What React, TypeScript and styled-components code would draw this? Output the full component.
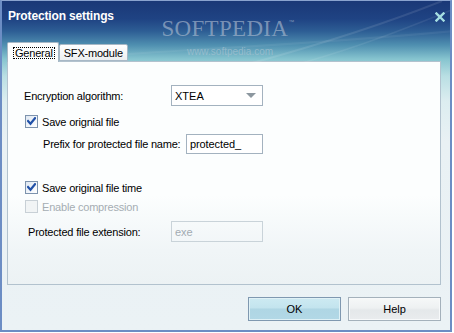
import React from 'react'
import styled, { createGlobalStyle } from 'styled-components'

const GlobalStyle = createGlobalStyle`
  html, body {
    margin: 0;
    padding: 0;
    background: #ffffff;
  }
  body {
    font-family: 'Liberation Sans', Arial, sans-serif;
    font-size: 11px;
    color: #000;
  }
`

const CheckMark: React.FC = () => (
  <svg width="9" height="9" viewBox="0 0 9 9">
    <polyline points="1,4 3.5,6.8 8,1.2" fill="none" stroke="#2151a8" strokeWidth="2.2" strokeLinecap="square" />
  </svg>
)

const CloseIcon: React.FC = () => (
  <svg width="10" height="10" viewBox="0 0 10 10">
    <path d="M1.5 1.5 L8.5 8.5 M8.5 1.5 L1.5 8.5" stroke="#a6dfe2" strokeWidth="2.4" strokeLinecap="square" />
  </svg>
)

const Arrow: React.FC = () => (
  <svg width="10" height="5" viewBox="0 0 10 5">
    <polygon points="0,0 10,0 5,5" fill="#8c979f" />
  </svg>
)

// faint light arcs drawn across the caption gradient
const CaptionGlow: React.FC = () => (
  <GlowSvg width="452" height="62" viewBox="0 0 452 62">
    <path d="M250 62 C 330 40, 390 20, 440 0" fill="none" stroke="rgba(255,255,255,0.10)" strokeWidth="2" />
    <path d="M300 62 C 360 45, 410 25, 452 8" fill="none" stroke="rgba(255,255,255,0.08)" strokeWidth="1.5" />
    <path d="M20 62 C 120 50, 260 48, 452 30" fill="none" stroke="rgba(255,255,255,0.06)" strokeWidth="2" />
  </GlowSvg>
)

const Check: React.FC<{ checked?: boolean; disabled?: boolean; label: string }> = ({ checked, disabled, label }) => (
  <CheckRow>
    <CheckBox $disabled={disabled}>{checked && <CheckMark />}</CheckBox>
    <CheckLabel $disabled={disabled}>{label}</CheckLabel>
  </CheckRow>
)

const App: React.FC = () => (
  <>
    <GlobalStyle />
    <Window>
      <CaptionGlow />
      <Watermark>
        <WatermarkBrand>
          SOFTPEDIA<sup>™</sup>
        </WatermarkBrand>
        <WatermarkUrl>www.softpedia.com</WatermarkUrl>
      </Watermark>
      <TitleBar>
        <Title>Protection settings</Title>
        <CloseButton>
          <CloseIcon />
        </CloseButton>
      </TitleBar>
      <TabStrip>
        <Tab $active>
          <FocusRing>General</FocusRing>
        </Tab>
        <Tab>SFX-module</Tab>
      </TabStrip>
      <Panel>
        <FieldRow $top={23}>
          <FieldLabel $indent={16}>Encryption algorithm:</FieldLabel>
          <Select>
            <span>XTEA</span>
            <Arrow />
          </Select>
        </FieldRow>
        <CheckWrap $top={9} $indent={17}>
          <Check checked label="Save orignial file" />
        </CheckWrap>
        <FieldRow $top={6} $height={20}>
          <FieldLabel $indent={35} $width={143}>
            Prefix for protected file name:
          </FieldLabel>
          <TextBox $width={77}>protected_</TextBox>
        </FieldRow>
        <CheckWrap $top={27} $indent={17}>
          <Check checked label="Save original file time" />
        </CheckWrap>
        <CheckWrap $top={6} $indent={17}>
          <Check disabled label="Enable compression" />
        </CheckWrap>
        <FieldRow $top={8}>
          <FieldLabel $indent={20} $width={143}>
            Protected file extension:
          </FieldLabel>
          <TextBox $width={92} $disabled>
            exe
          </TextBox>
        </FieldRow>
      </Panel>
      <ButtonRow>
        <Button $primary>OK</Button>
        <Button>Help</Button>
      </ButtonRow>
    </Window>
  </>
)

const Window = styled.div`
  position: relative;
  box-sizing: border-box;
  width: 452px;
  height: 332px;
  display: flex;
  flex-direction: column;
  border: 2px solid #6c8dc4;
  border-top: 1px solid #8aa3cf;
  background: linear-gradient(
    to bottom,
    #1a3877 0px,
    #1f4383 18px,
    #2d5d94 30px,
    #4f8fb0 44px,
    #86c4cf 58px,
    #b9dfe3 75px,
    #dcedf0 100px,
    #e9f1f4 140px,
    #ebf2f5 100%
  );
  overflow: hidden;
`

const GlowSvg = styled.svg`
  position: absolute;
  left: 0;
  top: 0;
  pointer-events: none;
`

const Watermark = styled.div`
  position: absolute;
  left: 160px;
  top: 16px;
  width: 132px;
  display: flex;
  flex-direction: column;
  align-items: center;
  pointer-events: none;
`

const WatermarkBrand = styled.div`
  font-family: 'Liberation Serif', 'Times New Roman', serif;
  font-size: 23px;
  letter-spacing: 0.3px;
  color: rgba(176, 190, 210, 0.62);
  line-height: 23px;
  sup {
    font-family: 'Liberation Sans', Arial, sans-serif;
    font-size: 6px;
    vertical-align: top;
    line-height: 10px;
  }
`

const WatermarkUrl = styled.div`
  margin-top: 6px;
  margin-left: 4px;
  font-family: 'Liberation Sans', Arial, sans-serif;
  font-size: 10px;
  color: rgba(170, 196, 210, 0.65);
  line-height: 11px;
`

const TitleBar = styled.div`
  position: relative;
  height: 29px;
  display: flex;
  align-items: center;
  justify-content: space-between;
  padding: 0 5px 0 6px;
`

const Title = styled.div`
  font-family: 'Liberation Sans', Arial, sans-serif;
  font-weight: bold;
  font-size: 12px;
  letter-spacing: -0.15px;
  color: #ffffff;
  margin-top: 1px;
`

const CloseButton = styled.div`
  width: 10px;
  height: 10px;
  display: flex;
  margin-top: 3px;
`

const TabStrip = styled.div`
  height: 19px;
  margin-top: 12px;
  padding-left: 5px;
  display: flex;
  align-items: flex-end;
  position: relative;
  z-index: 1;
`

const Tab = styled.div<{ $active?: boolean }>`
  box-sizing: border-box;
  height: ${p => (p.$active ? 20 : 17)}px;
  margin-bottom: ${p => (p.$active ? -1 : 0)}px;
  padding: ${p => (p.$active ? '0 3px 0 5px' : '1px 4px 0 4px')};
  display: flex;
  align-items: center;
  border: 1px solid #a7b8c6;
  border-bottom: ${p => (p.$active ? 'none' : '1px solid #a7b8c6')};
  border-radius: 2px 2px 0 0;
  background: ${p => (p.$active ? '#fcfefe' : 'linear-gradient(to bottom, #ffffff, #eceff0)')};
  color: #000;
  font-size: 11px;
  letter-spacing: -0.2px;
  white-space: nowrap;
`

const FocusRing = styled.span`
  border: 1px dotted #000;
  padding: 0 1px;
  line-height: 10px;
  height: 10px;
  display: flex;
  align-items: center;
`

const Panel = styled.div`
  box-sizing: border-box;
  margin: 0 9px 0 5px;
  height: 224px;
  border: 1px solid #b2c2ce;
  background: linear-gradient(to bottom, #fcfefe 0%, #fcfefe 60%, #f0f5f7 85%, #ecf2f4 100%);
  display: flex;
  flex-direction: column;
`

const FieldRow = styled.div<{ $top: number; $height?: number }>`
  display: flex;
  align-items: center;
  margin-top: ${p => p.$top}px;
  height: ${p => p.$height ?? 21}px;
`

const FieldLabel = styled.div<{ $indent: number; $width?: number }>`
  margin-left: ${p => p.$indent}px;
  width: ${p => p.$width ?? 147}px;
  font-size: 11px;
  letter-spacing: -0.2px;
  color: #000;
  white-space: nowrap;
`

const Select = styled.div`
  box-sizing: border-box;
  width: 92px;
  height: 21px;
  border: 1px solid #a3b2bf;
  background: #ffffff;
  display: flex;
  align-items: center;
  justify-content: space-between;
  padding: 0 6px 0 3px;
  font-size: 11px;
`

const TextBox = styled.div<{ $width: number; $disabled?: boolean }>`
  box-sizing: border-box;
  width: ${p => p.$width}px;
  height: 100%;
  border: 1px solid ${p => (p.$disabled ? '#c9d3d9' : '#a3b2bf')};
  background: ${p => (p.$disabled ? 'transparent' : '#ffffff')};
  color: ${p => (p.$disabled ? '#a2abb2' : '#000')};
  display: flex;
  align-items: center;
  padding: 0 3px;
  font-size: 11px;
  letter-spacing: -0.1px;
`

const CheckWrap = styled.div<{ $top: number; $indent: number }>`
  margin-top: ${p => p.$top}px;
  padding-left: ${p => p.$indent}px;
  height: 13px;
`

const CheckRow = styled.div`
  display: flex;
  align-items: center;
  height: 13px;
`

const CheckBox = styled.div<{ $disabled?: boolean }>`
  box-sizing: border-box;
  width: 13px;
  height: 13px;
  border: 1px solid ${p => (p.$disabled ? '#c8d0d6' : '#7d93ad')};
  background: ${p => (p.$disabled ? '#f1f4f5' : 'linear-gradient(135deg, #dfe8f2, #ffffff)')};
  display: flex;
  align-items: center;
  justify-content: center;
`

const CheckLabel = styled.span<{ $disabled?: boolean }>`
  margin-left: 4px;
  font-size: 11px;
  letter-spacing: -0.2px;
  color: ${p => (p.$disabled ? '#a5adb3' : '#000')};
  white-space: nowrap;
`

const ButtonRow = styled.div`
  display: flex;
  justify-content: flex-end;
  gap: 7px;
  margin: 12px 9px 0 0;
`

const Button = styled.div<{ $primary?: boolean }>`
  box-sizing: border-box;
  width: 93px;
  height: 24px;
  border: 1px solid ${p => (p.$primary ? '#7f98b0' : '#a4b1bb')};
  box-shadow: inset 0 0 0 1px ${p => (p.$primary ? '#dff1f6' : '#f7f9fa')};
  background: ${p =>
    p.$primary
      ? 'linear-gradient(to bottom, #cdeaf2 0%, #c3e4ee 45%, #afd6e4 50%, #b2d8e6 100%)'
      : 'linear-gradient(to bottom, #f6f8f8 0%, #eef1f2 45%, #e4e8ea 55%, #e9ecee 100%)'};
  display: flex;
  align-items: center;
  justify-content: center;
  font-size: 11px;
  color: #000;
`

export default App
